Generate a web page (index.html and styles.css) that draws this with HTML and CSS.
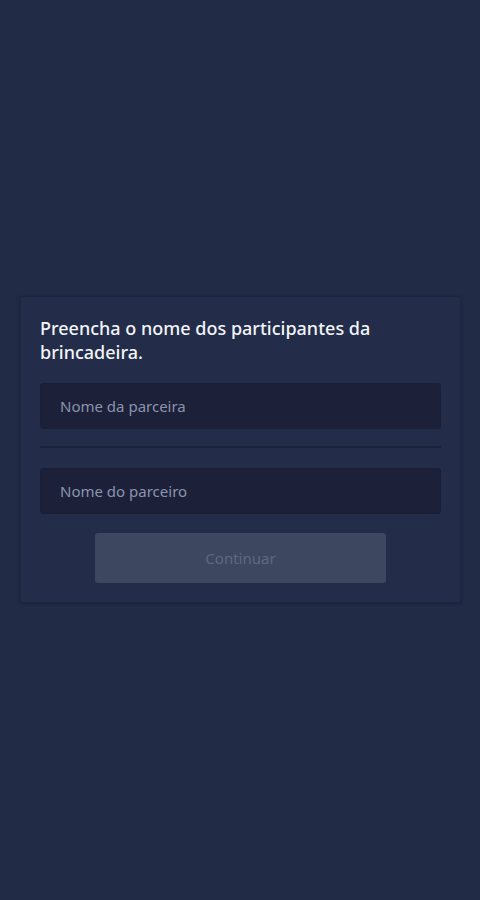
FILE: index.html
```html
<!DOCTYPE html>
<html lang="pt">
<head>
<meta charset="utf-8">
<title>Participantes</title>
<link rel="stylesheet" href="styles.css">
</head>
<body>
<main class="screen">
  <section class="card">
    <h1 class="title">Preencha o nome dos participantes da brincadeira.</h1>
    <input class="field" type="text" placeholder="Nome da parceira">
    <hr class="divider">
    <input class="field" type="text" placeholder="Nome do parceiro">
    <button class="btn" type="button" disabled>Continuar</button>
  </section>
</main>
</body>
</html>
```
FILE: styles.css
```css
html, body {
  margin: 0;
  padding: 0;
  background: #212b46;
}
body {
  font-family: "Noto Sans", "Open Sans", sans-serif;
}
.screen {
  min-height: 900px;
  display: flex;
  align-items: center;
  justify-content: center;
  padding: 0 19px 1px 20px;
  box-sizing: border-box;
}
.card {
  width: 100%;
  box-sizing: border-box;
  background: #232d49;
  border: 1px solid #1d2640;
  border-radius: 2px;
  box-shadow: 0 1px 3px rgba(15, 20, 35, 0.35);
  padding: 19px 19px 19px 19px;
  display: flex;
  flex-direction: column;
}
.title {
  margin: 0;
  font-size: 18px;
  line-height: 24px;
  font-weight: 500;
  color: #f2f4f8;
  letter-spacing: 0;
}
.field {
  margin-top: 19px;
  height: 46px;
  box-sizing: border-box;
  background: #1c2139;
  border: 1px solid #1a1f35;
  border-radius: 3px;
  padding: 0 19px;
  font-family: inherit;
  font-size: 15px;
  color: #e6e9f0;
  outline: none;
}
.field::placeholder {
  color: #8b93ad;
}
.divider {
  margin: 17px 0 1px;
  border: 0;
  height: 2px;
  background: #1b2239;
}
.btn {
  align-self: center;
  margin-top: 19px;
  width: 291px;
  height: 50px;
  background: #3e4760;
  border: 0;
  border-radius: 3px;
  font-family: inherit;
  font-size: 15px;
  color: #5f6883;
}
```
